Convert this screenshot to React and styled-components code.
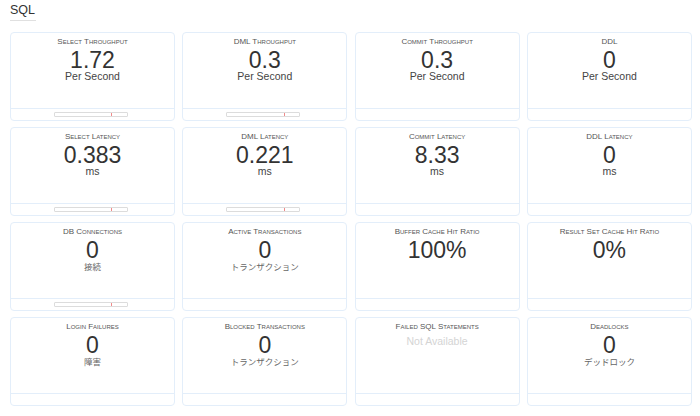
import React from "react";
import styled, { createGlobalStyle } from "styled-components";

const Global = createGlobalStyle`
  html, body { margin: 0; padding: 0; background: #fff; }
  body { font-family: "Liberation Sans", Arial, "Noto Sans CJK JP", sans-serif; }
`;

const Page = styled.div`
  padding: 3px 8px 0 10px;
  width: 700px;
  box-sizing: border-box;
`;

const Heading = styled.div`
  font-size: 12.5px;
  color: #333;
  width: fit-content;
  padding: 0 1px 3px 0;
  border-bottom: 1px solid #e0e0e0;
  line-height: 14px;
`;

const Grid = styled.div`
  margin-top: 11px;
  display: grid;
  grid-template-columns: repeat(4, 165px);
  column-gap: 7.3px;
  row-gap: 6px;
`;

const Card = styled.div`
  height: 89px;
  box-sizing: border-box;
  border: 1px solid #e3eefa;
  border-radius: 4px;
  display: flex;
  flex-direction: column;
`;

const Body = styled.div`
  flex: 1;
  display: flex;
  flex-direction: column;
  align-items: center;
  padding-top: 4px;
`;

const Title = styled.div`
  font-size: 8px;
  font-variant: small-caps;
  text-transform: capitalize;
  color: #555;
  line-height: 9px;
`;

const Value = styled.div`
  font-size: 23px;
  color: #333;
  line-height: 21px;
  margin-top: 4px;
`;

const Unit = styled.div`
  font-size: ${(p) => (p.$jp ? "8.5px" : "10.5px")};
  color: ${(p) => (p.$jp ? "#666" : "#444")};
  line-height: ${(p) => (p.$jp ? "12px" : "10px")};
  margin-top: 0;
  font-family: "Liberation Sans", Arial, "Noto Sans CJK JP", sans-serif;
`;

const NA = styled.div`
  font-size: 10.5px;
  color: #d4d4d4;
  margin-top: 4px;
`;

const Footer = styled.div`
  height: 11px;
  border-top: 1px solid #e3eefa;
  display: flex;
  align-items: center;
  justify-content: center;
  padding-right: 4px;
`;

const Bar = styled.div`
  position: relative;
  width: 72px;
  height: 3px;
  border: 1px solid #dcdcdc;
  border-radius: 1px;
  background: #fff;
`;

const Tick = styled.div`
  position: absolute;
  left: ${(p) => p.$pos}%;
  top: 0;
  width: 1px;
  height: 100%;
  background: #f08a8a;
`;

const data = [
  { t: "Select Throughput", v: "1.72", u: "Per Second", bar: 79 },
  { t: "DML Throughput", v: "0.3", u: "Per Second", bar: 79 },
  { t: "Commit Throughput", v: "0.3", u: "Per Second" },
  { t: "DDL", v: "0", u: "Per Second" },
  { t: "Select Latency", v: "0.383", u: "ms", bar: 79 },
  { t: "DML Latency", v: "0.221", u: "ms", bar: 79 },
  { t: "Commit Latency", v: "8.33", u: "ms" },
  { t: "DDL Latency", v: "0", u: "ms" },
  { t: "DB Connections", v: "0", u: "接続", jp: true, bar: 79 },
  { t: "Active Transactions", v: "0", u: "トランザクション", jp: true },
  { t: "Buffer Cache Hit Ratio", v: "100%" },
  { t: "Result Set Cache Hit Ratio", v: "0%" },
  { t: "Login Failures", v: "0", u: "障害", jp: true },
  { t: "Blocked Transactions", v: "0", u: "トランザクション", jp: true },
  { t: "Failed SQL Statements", na: true },
  { t: "Deadlocks", v: "0", u: "デッドロック", jp: true },
];

export default function App() {
  return (
    <>
      <Global />
      <Page>
        <Heading>SQL</Heading>
        <Grid>
          {data.map((d, i) => (
            <Card key={i}>
              <Body>
                <Title>{d.t}</Title>
                {d.na ? (
                  <NA>Not Available</NA>
                ) : (
                  <>
                    <Value>{d.v}</Value>
                    {d.u && <Unit $jp={d.jp}>{d.u}</Unit>}
                  </>
                )}
              </Body>
              <Footer>
                {d.bar != null && (
                  <Bar>
                    <Tick $pos={d.bar} />
                  </Bar>
                )}
              </Footer>
            </Card>
          ))}
        </Grid>
      </Page>
    </>
  );
}
